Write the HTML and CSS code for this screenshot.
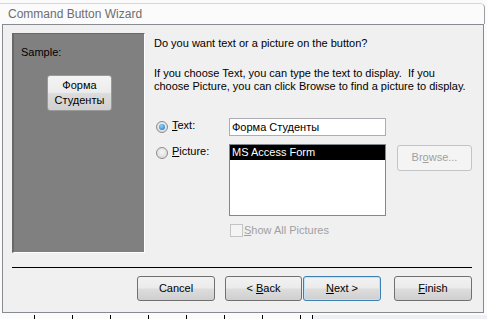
FILE: index.html
```html
<!DOCTYPE html>
<html lang="en">

<head>
    <meta charset="UTF-8">
    <title>Command Button Wizard</title>
    <link rel="stylesheet" href="styles.css">
</head>

<body>

    <div class="titlebar">Command Button Wizard</div>

    <div class="dialog">
        <div class="content">
            <div class="sample">
                <div class="sample-label">Sample:</div>
                <div class="sample-button">Форма<br>Студенты</div>
            </div>

            <div class="main">
                <p class="question">Do you want text or a picture on the button?</p>
                <p class="hint">If you choose Text, you can type the text to display.&nbsp; If you<br>choose Picture, you can click Browse to find a picture to display.</p>

                <div class="options">
                    <label class="option">
                        <span class="radio checked"></span>
                        <span><u>T</u>ext:</span>
                    </label>
                    <div class="textbox">Форма Студенты</div>
                    <div></div>

                    <label class="option">
                        <span class="radio"></span>
                        <span><u>P</u>icture:</span>
                    </label>
                    <div class="listbox">
                        <div class="list-item selected">MS Access Form</div>
                    </div>
                    <div class="browse">Br<u>o</u>wse...</div>

                    <div></div>
                    <label class="checkbox-row">
                        <span class="checkbox"></span>
                        <span><u>S</u>how All Pictures</span>
                    </label>
                </div>
            </div>
        </div>

        <div class="separator"></div>

        <div class="buttons">
            <div class="button cancel">Cancel</div>
            <div class="button back">&lt; <u>B</u>ack</div>
            <div class="button default"><u>N</u>ext &gt;</div>
            <div class="button finish"><u>F</u>inish</div>
        </div>
    </div>

    <!-- bits of the sheet behind the dialog -->
    <div class="behind">
        <span class="cell first"></span>
        <span class="cell"></span>
        <span class="cell"></span>
        <span class="cell"></span>
        <span class="cell"></span>
        <span class="cell"></span>
        <span class="cell"></span>
        <span class="cell"></span>
        <span class="cell last"></span>
        <span class="rest"></span>
    </div>

</body>

</html>
```

FILE: styles.css
```css
body {
    margin: 0;
    background-color: #fbfbfb;
    font-family: "Liberation Sans", Arial, sans-serif;
    font-size: 11px;
    color: #000000;
    width: 487px;
    height: 319px;
    overflow: hidden;
}

u {
    text-decoration: underline;
    text-underline-offset: 1px;
}

/* window caption */
.titlebar {
    height: 21px;
    margin: 3px 2px 0 0;
    padding-left: 8px;
    border-top: 1px solid #d6d6d6;
    border-right: 1px solid #9aa0a6;
    border-top-right-radius: 5px;
    font-size: 12px;
    line-height: 20px;
    color: #6e6e6e;
    box-sizing: border-box;
}

.dialog {
    margin-left: 2px;
    width: 482px;
    height: 289px;
    box-sizing: border-box;
    border: 1px solid #878b90;
    background-color: #f0f0f0;
    padding: 8px 11px 0 9px;
}

.content {
    display: flex;
    gap: 9px;
}

/* grey preview panel on the left */
.sample {
    width: 133px;
    height: 220px;
    box-sizing: border-box;
    background-color: #808080;
    border-top: 1px solid #696969;
    border-left: 2px solid #696969;
    border-right: 1px solid #ffffff;
    border-bottom: 1px solid #ffffff;
    padding: 11px 0 0 7px;
}

.sample-label {
    line-height: 14px;
}

.sample-button {
    margin: 16px 0 0 26px;
    width: 65px;
    height: 36px;
    box-sizing: border-box;
    border: 1px solid #9a9a9a;
    border-radius: 3px;
    background: linear-gradient(#f4f4f4 0%, #ececec 48%, #dcdcdc 52%, #d0d0d0 100%);
    text-align: center;
    line-height: 15px;
    padding-top: 2px;
}

.main {
    flex: 1;
    white-space: nowrap;
}

.question {
    margin: 3px 0 0 0;
    line-height: 14px;
}

.hint {
    margin: 17px 0 0 0;
    line-height: 13px;
}

.options {
    margin-top: 25px;
    display: grid;
    grid-template-columns: 75px 157px 1fr;
    row-gap: 8px;
}

.option {
    display: flex;
    align-items: flex-start;
    gap: 4px;
    padding-left: 2px;
    line-height: 14px;
}

.radio {
    width: 12px;
    height: 12px;
    margin-top: 3px;
    border-radius: 50%;
    border: 1px solid #8b8b8b;
    background: radial-gradient(circle at 50% 40%, #f6f6f6, #d4d4d4);
    box-sizing: border-box;
    position: relative;
}

.radio.checked::after {
    content: "";
    position: absolute;
    left: 2px;
    top: 2px;
    width: 6px;
    height: 6px;
    border-radius: 50%;
    background: radial-gradient(circle at 40% 35%, #8fd3ff, #1b6fb3);
}

.textbox {
    height: 18px;
    box-sizing: border-box;
    border: 1px solid #abadb3;
    background-color: #ffffff;
    padding-left: 2px;
    line-height: 16px;
}

.listbox {
    height: 72px;
    box-sizing: border-box;
    border: 1px solid #828790;
    background-color: #ffffff;
}

.list-item {
    height: 15px;
    line-height: 14px;
    padding-left: 2px;
}

.list-item.selected {
    background-color: #000000;
    color: #ffffff;
}

.browse {
    margin: 1px 0 0 11px;
    width: 75px;
    height: 26px;
    box-sizing: border-box;
    border: 1px solid #c4c4c4;
    border-radius: 3px;
    background-color: #f4f4f4;
    color: #a0a0a0;
    text-align: center;
    line-height: 23px;
}

.checkbox-row {
    display: flex;
    align-items: center;
    gap: 1px;
    color: #a0a0a0;
    margin: -1px 0 0 1px;
    line-height: 14px;
}

.checkbox {
    width: 13px;
    height: 13px;
    box-sizing: border-box;
    border: 1px solid #c4c4c4;
    background-color: #f4f4f4;
}

.separator {
    margin-top: 14px;
    height: 1px;
    background-color: #000000;
}

.buttons {
    margin-top: 8px;
    display: flex;
    justify-content: flex-end;
}

.button {
    width: 78px;
    height: 25px;
    box-sizing: border-box;
    border: 1px solid #707070;
    border-radius: 3px;
    background: linear-gradient(#f2f2f2 0%, #ebebeb 48%, #dddddd 52%, #cfcfcf 100%);
    text-align: center;
    line-height: 22px;
}

.button.back {
    width: 77px;
    margin-left: 10px;
}

.button.default {
    margin-left: 1px;
    border-color: #3c7fb1;
    box-shadow: inset 0 0 0 1px #bfe3f8;
}

.button.finish {
    margin-left: 13px;
}

/* strip of the grid showing under the dialog */
.behind {
    display: flex;
    height: 5px;
    margin-top: 2px;
}

.cell {
    width: 38px;
    border-right: 1px solid #000000;
    box-sizing: border-box;
}

.cell.first {
    width: 35px;
}

.cell.last {
    width: 12px;
}

.rest {
    flex: 1;
    background-color: #eef0f4;
}
```
